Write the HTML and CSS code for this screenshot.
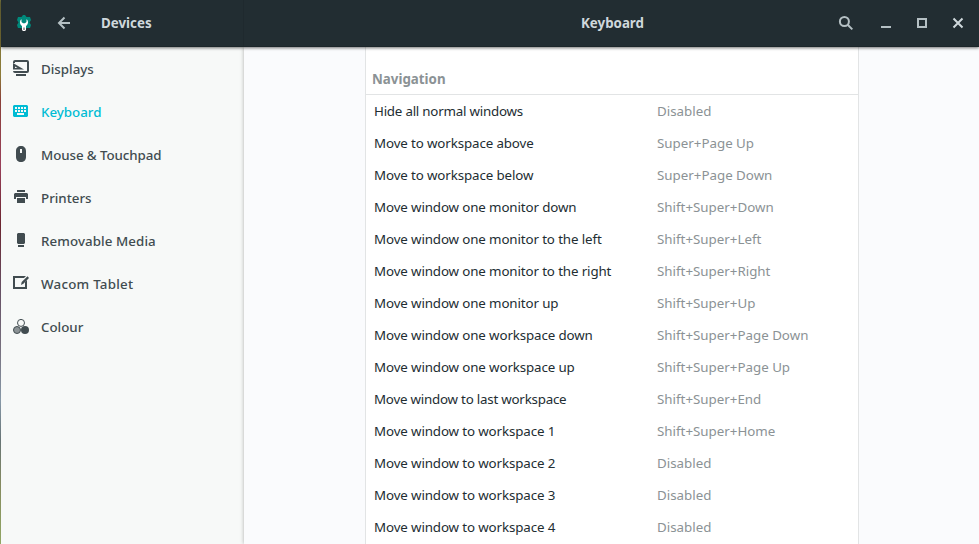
FILE: index.html
```html
<!DOCTYPE html>
<html lang="en">
<head>
<meta charset="utf-8">
<title>Keyboard</title>
<link rel="stylesheet" href="styles.css">
</head>
<body>
<div class="window">
  <header class="bar">
    <div class="bar-left">
      <svg class="app-icon" viewBox="0 0 16 16"><path fill="#00897b" d="M5.500 2 7 0h2l1.500 2H14l1 3-1.500 2.500L15 10l-1 3h-3.500L9 15H7l-1.500-2H2l-1-3 1.500-2.500L1 5l1-3z"/><path fill="#fff" d="M5.500 4.200C3.500 5.500 3.300 9 6 11v4l1 1h2l1-1v-4c2.700-2 2.500-5.500.5-6.800V7L9 8.300H7L5.500 7z"/><path fill="#777" d="M7.300 12.500h1.400V15H7.300z"/></svg>
      <svg class="icon back" viewBox="0 0 16 16"><path d="M14 8H3M8.500 2.500 3 8l5.500 5.500"/></svg>
      <span class="title">Devices</span>
    </div>
    <div class="bar-main">
      <span class="title">Keyboard</span>
      <div class="controls">
        <svg class="icon search" viewBox="0 0 16 16"><circle cx="6.400" cy="6.500" r="4.500"/><path d="m9.700 9.800 4.600 4.600"/></svg>
        <svg class="icon" viewBox="0 0 16 16"><path d="M3 12h10"/></svg>
        <svg class="icon" viewBox="0 0 16 16"><path d="M4 4h8v8H4z"/></svg>
        <svg class="icon close" viewBox="0 0 16 16"><path d="m3.500 3.500 9 9m0-9-9 9"/></svg>
      </div>
    </div>
  </header>
  <div class="body">
    <nav class="sidebar">
      <a class="item"><svg viewBox="0 0 16 16"><path d="M2 0h12q2 0 2 2v9q0 2-2 2H2q-2 0-2-2h14V2H2v1H0V2q0-2 2-2z"/><path fill-rule="evenodd" d="M0 3l11 6.500H0zm2 3.500V8h2.500z"/><path d="M3 14h10v2H3z"/></svg>Displays</a>
      <a class="item active"><svg viewBox="0 0 16 16"><path fill-rule="evenodd" d="M1 2h13l1 1v10l-1 1H1l-1-1V3zM2 4v2h2V4zm3 0v2h2V4zm3 0v2h2V4zm3 0v2h2V4zM2 7v2h2V7zm3 0v2h2V7zm3 0v2h2V7zm3 0v2h2V7zm-7 3v2h7v-2z"/></svg>Keyboard</a>
      <a class="item snug"><svg viewBox="0 0 16 16"><path fill-rule="evenodd" d="M8 0c3 0 5 2 5 5v6c0 3-2 5-5 5s-5-2-5-5V5c0-3 2-5 5-5zM7 3v4h2V3z"/></svg>Mouse &amp; Touchpad</a>
      <a class="item"><svg viewBox="0 0 16 16"><path d="M4 1h8v2H4zM2 4h12l1 1v5h-2V8H3v2H1V5zM4 9h8v5H4z"/></svg>Printers</a>
      <a class="item loose"><svg viewBox="0 0 16 16"><path d="M5 1h6l1 1v9l-1 1H5l-1-1V2zM5 13h6v2H5z"/></svg>Removable Media</a>
      <a class="item wide"><svg viewBox="0 0 16 16"><path d="M0 1h13l-2 2H2v9h10V7l2-2v9H0z"/><path d="m8 10 .7-2.900L14.500 1.300 16 2.900l-5.600 5.800z"/></svg>Wacom Tablet</a>
      <a class="item"><svg viewBox="0 0 16 16"><circle cx="12" cy="12" r="4"/><circle cx="4" cy="12" r="3.500" fill="#8b9295" stroke="#414c50"/><circle cx="8" cy="4.900" r="3.500" fill="#f7f9f8" stroke="#414c50"/></svg>Colour</a>
    </nav>
    <main class="content">
      <section class="list">
        <h2>Navigation</h2>
        <div class="row"><span class="name tight">Hide all normal windows</span><span class="key">Disabled</span></div>
        <div class="row"><span class="name">Move to workspace above</span><span class="key">Super+Page Up</span></div>
        <div class="row"><span class="name">Move to workspace below</span><span class="key">Super+Page Down</span></div>
        <div class="row"><span class="name">Move window one monitor down</span><span class="key">Shift+Super+Down</span></div>
        <div class="row"><span class="name">Move window one monitor to the left</span><span class="key">Shift+Super+Left</span></div>
        <div class="row"><span class="name">Move window one monitor to the right</span><span class="key">Shift+Super+Right</span></div>
        <div class="row"><span class="name">Move window one monitor up</span><span class="key">Shift+Super+Up</span></div>
        <div class="row"><span class="name">Move window one workspace down</span><span class="key">Shift+Super+Page Down</span></div>
        <div class="row"><span class="name">Move window one workspace up</span><span class="key">Shift+Super+Page Up</span></div>
        <div class="row"><span class="name tight">Move window to last workspace</span><span class="key">Shift+Super+End</span></div>
        <div class="row"><span class="name">Move window to workspace 1</span><span class="key">Shift+Super+Home</span></div>
        <div class="row"><span class="name">Move window to workspace 2</span><span class="key">Disabled</span></div>
        <div class="row"><span class="name">Move window to workspace 3</span><span class="key">Disabled</span></div>
        <div class="row"><span class="name">Move window to workspace 4</span><span class="key">Disabled</span></div>
      </section>
    </main>
  </div>
</div>
</body>
</html>
```
FILE: styles.css
```css
* { box-sizing: border-box; }
body {
  margin: 0;
  height: 544px;
  overflow: hidden;
  padding-left: 1px;
  font: 13.33px/18px "Noto Sans", sans-serif;
  background: linear-gradient(#77743d 0, #8d7c38 75px, #8a4038 100px, #99405a 165px, #6b2630 225px, #665064 290px, #77717f 350px, #8799a8 400px, #677476 440px, #858b60 485px, #91a663 544px);
}
.window { height: 544px; display: flex; flex-direction: column; }
.bar {
  height: 47px;
  flex: none;
  display: flex;
  background: #222d32;
  border-bottom: 1px solid #1c262a;
  box-shadow: 0 1px 3px rgba(0, 0, 0, .55);
  z-index: 2;
}
.bar-left {
  width: 243px;
  padding: 0 0 1px 15px;
  display: flex;
  align-items: center;
  border-right: 1px solid #1f292e;
}
.app-icon { width: 16px; height: 16px; }
.back { margin: 0 29px 0 24px; }
.title { font-weight: 700; color: #cfd8dc; }
.bar-main {
  flex: 1;
  display: grid;
  grid-template-columns: 1fr auto 1fr;
  align-items: center;
  padding: 0 13px 1px 15px;
}
.bar-main .title { grid-column: 2; }
.controls { display: flex; justify-content: flex-end; gap: 20px; }
.icon { width: 16px; height: 16px; fill: none; stroke: #b5c0c4; stroke-width: 2; }
.search { margin-right: 4px; }
.close { stroke: #cfd8dc; }
.body { flex: 1; min-height: 0; display: flex; }
.sidebar { width: 243px; background: #f7f9f8; }
.item {
  height: 43px;
  padding: 0 12px;
  display: flex;
  align-items: center;
  gap: 12px;
  font-weight: 500;
  color: #414c50;
}
.item svg { width: 16px; height: 16px; margin-top: -1px; fill: currentColor; }
.active { color: #00bcd4; }
.snug { letter-spacing: -.08px; }
.loose { letter-spacing: .08px; }
.wide { letter-spacing: .25px; }
.content {
  flex: 1;
  display: flex;
  padding-left: 121px;
  background: #fafbfd;
  box-shadow: 0 0 4px rgba(0, 0, 0, .3);
}
.list {
  width: 494px;
  background: #fff;
  border: solid #e2e4e5;
  border-width: 0 1px;
}
h2 {
  margin: 0;
  height: 48px;
  padding: 23px 6px 0;
  border-bottom: 1px solid #e2e4e5;
  font-size: 13.33px;
  line-height: 18px;
  color: #8b9295;
}
.row {
  height: 32px;
  padding-left: 8px;
  display: grid;
  grid-template-columns: 283px 1fr;
  align-items: center;
  color: #222d32;
}
.name { letter-spacing: -.12px; }
.tight { letter-spacing: -.22px; }
.key { color: #8b9295; }
```
